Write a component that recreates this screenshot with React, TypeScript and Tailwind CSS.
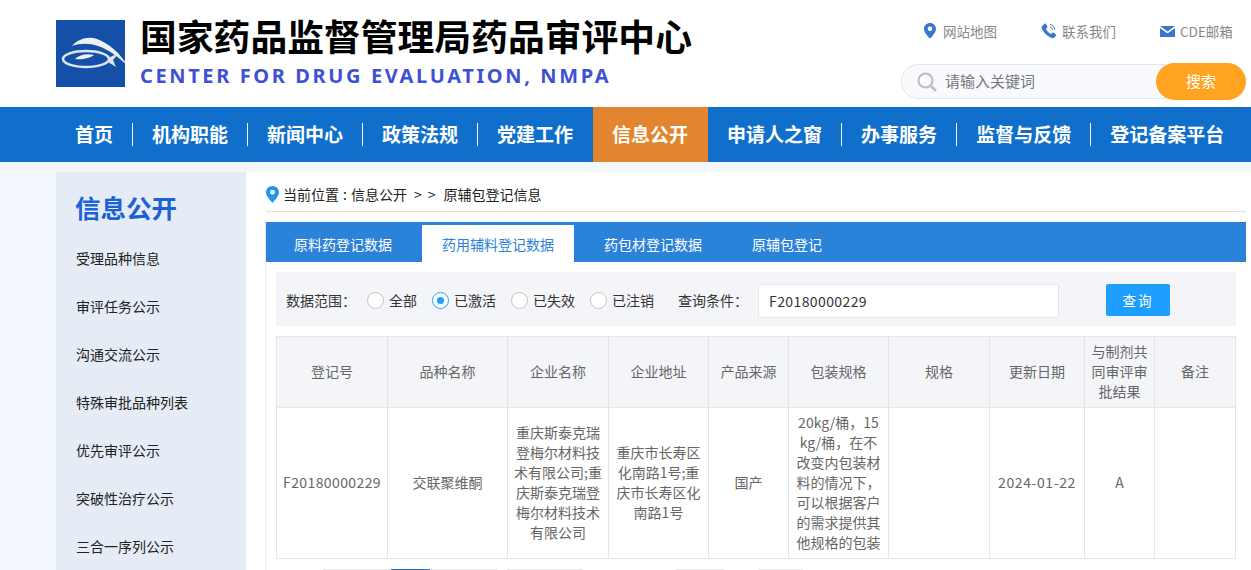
import React from 'react';

const navItems = ['首页', '机构职能', '新闻中心', '政策法规', '党建工作', '信息公开', '申请人之窗', '办事服务', '监督与反馈', '登记备案平台'];
const sideItems = ['受理品种信息', '审评任务公示', '沟通交流公示', '特殊审批品种列表', '优先审评公示', '突破性治疗公示', '三合一序列公示'];
const radios = ['全部', '已激活', '已失效', '已注销'];
const widths = [111, 120, 101, 100, 80, 100, 101, 95, 70, 81];
const companyLines = ['重庆斯泰克瑞', '登梅尔材料技', '术有限公司;重', '庆斯泰克瑞登', '梅尔材料技术', '有限公司'];
const addressLines = ['重庆市长寿区', '化南路1号;重', '庆市长寿区化', '南路1号'];
const packLines = ['20kg/桶，15', 'kg/桶，在不', '改变内包装材', '料的情况下，', '可以根据客户', '的需求提供其', '他规格的包装'];

const Logo: React.FC = () => (
  <svg width="69" height="67" viewBox="0 0 69 67" className="shrink-0 overflow-visible">
    <rect width="69" height="67" fill="#1450a8" />
    <path d="M16 26C22 19 32 16 41 19C52 23 63 32 72 46C62 37 52 29 42 26C33 23 24 23 16 26Z" fill="#eef1f4" />
    <ellipse cx="30" cy="39" rx="23" ry="8" fill="none" stroke="#dfe5ea" strokeWidth="2.500" />
    <path d="M52 38L63 33L57 40L60 47L52 42Z" fill="#dfe5ea" />
    <path d="M19 39C23 35 31 33 38 35C34 38 26 40 19 39Z" fill="#eef1f4" />
  </svg>
);

const Pin: React.FC<{ color: string; size: number }> = ({ color, size }) => (
  <svg width={size} height={size * 1.3} viewBox="0 0 20 26">
    <path fillRule="evenodd" d="M10 0C4.500 0 0 4.400 0 9.800C0 16.500 10 26 10 26S20 16.500 20 9.800C20 4.400 15.500 0 10 0ZM10 13.500A3.800 3.800 0 1 1 10 5.900A3.800 3.800 0 0 1 10 13.500Z" fill={color} />
  </svg>
);

const Phone: React.FC = () => (
  <svg width="16" height="16" viewBox="0 0 16 16">
    <path d="M1 3.200L3.600.800C4 .500 4.500.500 4.800.900L6.400 3.300C6.600 3.700 6.600 4.100 6.200 4.400L5 5.500C5.600 7.800 7.600 10 10 11L11.300 9.700C11.600 9.400 12.100 9.400 12.500 9.600L15 11.400C15.400 11.700 15.400 12.300 15.100 12.600L13.200 14.800C12.800 15.200 12.200 15.400 11.600 15.200C6.400 13.800 1.800 9 .500 4.600C.400 4.100.600 3.600 1 3.200Z" fill="#3a76cf" />
    <path d="M9 1.500C11.500 2 13.500 4 14 6.500M9 4C10.300 4.300 11.300 5.300 11.600 6.500" fill="none" stroke="#3a76cf" strokeWidth="1" />
  </svg>
);

const Mail: React.FC = () => (
  <svg width="15" height="11" viewBox="0 0 15 11">
    <path d="M0 0H15L7.500 5.500Z" fill="#3a76cf" />
    <path d="M0 2L7.500 7.500L15 2V11H0Z" fill="#3a76cf" />
  </svg>
);

const Lines: React.FC<{ lines: string[] }> = ({ lines }) => (
  <>
    {lines.map((l) => (
      <div key={l} className="whitespace-nowrap">{l}</div>
    ))}
  </>
);

const App: React.FC = () => {
  return (
    <div className="h-[570px] w-[1251px] overflow-hidden bg-[#f3f7fe] font-['Noto_Sans_CJK_SC','Noto_Sans',sans-serif]">
      {/* header */}
      <div className="flex h-[107px] justify-between bg-white pl-[56px] pr-[5px]">
        <div className="flex items-start pt-[20px]">
          <Logo />
          <div className="ml-[15px] -mt-[10px]">
            <div className="whitespace-nowrap text-[36.800px] font-bold leading-[50px] text-black">国家药品监督管理局药品审评中心</div>
            <div className="mt-[3px] whitespace-nowrap font-['Noto_Sans',sans-serif] text-[20px] font-bold leading-[26px] tracking-[2.620px] text-[#3f51d3]">CENTER FOR DRUG EVALUATION, NMPA</div>
          </div>
        </div>
        <div className="w-[345px] pt-[22px]">
          <div className="flex h-[18px] items-center text-[13.500px] leading-[18px] text-[#888888]">
            <span className="ml-[23px] flex w-[117px] items-center gap-[7px]"><Pin color="#3a76cf" size={12} /><span>网站地图</span></span>
            <span className="flex w-[119px] items-center gap-[5px]"><Phone /><span>联系我们</span></span>
            <span className="flex items-center gap-[5px]"><Mail /><span>CDE邮箱</span></span>
          </div>
          <div className="mt-[23px] flex items-center">
            <div className="flex h-[35px] w-[265px] items-center rounded-l-full border border-[#e3e5e8] bg-[#f8fafe] pl-[15px]">
              <svg width="20" height="20" viewBox="0 0 20 20">
                <circle cx="8.500" cy="8.500" r="7" fill="none" stroke="#bdbdbd" strokeWidth="2" />
                <path d="M14 14L19 19" stroke="#bdbdbd" strokeWidth="2.500" />
              </svg>
              <span className="ml-[8px] text-[15px] text-[#777777]">请输入关键词</span>
            </div>
            <div className="-ml-[10px] flex h-[37px] w-[90px] items-center justify-center rounded-full bg-[#ffa320] text-[15px] text-white">搜索</div>
          </div>
        </div>
      </div>

      {/* nav */}
      <div className="flex h-[55px] items-center bg-[#0f6fcb] pl-[56px]">
        {navItems.map((item, i) => (
          <div key={item} className={`flex h-full items-center ${item === '信息公开' ? 'bg-[#e3852f]' : ''}`}>
            <span className="-mt-[2px] whitespace-nowrap px-[19px] text-[19px] font-bold leading-none text-white">{item}</span>
            {i < navItems.length - 1 && navItems[i + 1] !== '信息公开' && item !== '信息公开' ? (
              <span className="-mt-[1px] h-[23px] w-px bg-white" />
            ) : (
              <span className="w-px" />
            )}
          </div>
        ))}
      </div>

      {/* body */}
      <div className="mt-[10px] flex pl-[56px]">
        <div className="h-[500px] w-[190px] shrink-0 bg-[#e6ecf5] pl-[20px]">
          <h2 className="-ml-px pt-[17px] text-[25.500px] font-bold leading-[36px] text-[#1c62d6]">信息公开</h2>
          <div className="mt-[9px]">
            {sideItems.map((item) => (
              <div key={item} className="flex h-[48px] items-center text-[14px] text-[#222222]">{item}</div>
            ))}
          </div>
        </div>

        <div className="min-h-[500px] w-[1005px] min-w-0 shrink-0 bg-white pl-[20px] pr-[5px]">
          <div className="flex h-[40px] items-center border-b border-[#e2e2e2] pt-[6px] text-[14px] text-[#222222]">
            <Pin color="#1e96f0" size={13} />
            <span className="ml-[4px]">当前位置</span>
            <span className="mx-[3px] w-[6px] text-center">:</span>
            <span>信息公开</span>
            <span className="ml-[7px]">&gt;</span>
            <span className="ml-[6px]">&gt;</span>
            <span className="ml-[8px]">原辅包登记信息</span>
          </div>

          <div className="-ml-px mt-[10px] border-l border-[#e8edf3]">
            <div className="flex h-[40px] items-end bg-[#2b82d9] text-[14px] leading-none text-white">
              <div className="flex h-[37px] items-center pl-[28px] pr-[30px]">原料药登记数据</div>
              <div className="flex h-[37px] items-center bg-white px-[20px] text-[#2b82d9]">药用辅料登记数据</div>
              <div className="flex h-[37px] items-center pl-[30px] pr-[25px]">药包材登记数据</div>
              <div className="flex h-[37px] items-center pl-[25px]">原辅包登记</div>
            </div>

            <div className="px-[10px] pt-[10px]">
              <div className="flex h-[54px] items-center bg-[#f4f5f9] pl-[10px] pt-[2px] text-[14px] text-[#333333]">
                <span className="w-[81px]">数据范围：</span>
                {radios.map((r, i) => (
                  <span key={r} className="mr-[15px] flex items-center gap-[5px]">
                    <span className={`flex h-[17px] w-[17px] items-center justify-center rounded-full border bg-white ${i === 1 ? 'border-[#1e9fff]' : 'border-[#c4c4c4]'}`}>
                      {i === 1 && <span className="h-[7px] w-[7px] rounded-full bg-[#1e9fff]" />}
                    </span>
                    {r}
                  </span>
                ))}
                <span className="ml-[9px] w-[80px]">查询条件：</span>
                <div className="mt-[2px] flex h-[34px] w-[301px] items-center rounded-[2px] border border-[#e6e6e6] bg-white pl-[10px] text-[14px] tracking-[0.400px] text-[#333333]">F20180000229</div>
                <div className="ml-[47px] flex h-[32px] w-[64px] items-center justify-center rounded-[2px] bg-[#1e9fff] text-[13.500px] tracking-[2px] text-white">查询</div>
              </div>

              <table className="mt-[10px] w-[959px] table-fixed border-collapse text-center text-[14px] leading-[20px] text-[#666666]">
                <colgroup>
                  {widths.map((w, i) => (
                    <col key={i} style={{ width: w }} />
                  ))}
                </colgroup>
                <thead>
                  <tr className="h-[71px] bg-[#f4f5f9] [&>th]:pb-[2px]">
                    {['登记号', '品种名称', '企业名称', '企业地址', '产品来源', '包装规格', '规格', '更新日期'].map((h) => (
                      <th key={h} className="border border-[#e4e6ea] px-[8px] font-normal">{h}</th>
                    ))}
                    <th className="border border-[#e4e6ea] px-[5px] font-normal">与制剂共同审评审批结果</th>
                    <th className="border border-[#e4e6ea] font-normal">备注</th>
                  </tr>
                </thead>
                <tbody>
                  <tr className="h-[151px] [&>td]:pb-[2px]">
                    <td className="border border-[#e4e6ea] tracking-[0.400px]">F20180000229</td>
                    <td className="border border-[#e4e6ea]">交联聚维酮</td>
                    <td className="border border-[#e4e6ea]"><Lines lines={companyLines} /></td>
                    <td className="border border-[#e4e6ea]"><Lines lines={addressLines} /></td>
                    <td className="border border-[#e4e6ea]">国产</td>
                    <td className="border border-[#e4e6ea]"><Lines lines={packLines} /></td>
                    <td className="border border-[#e4e6ea]" />
                    <td className="border border-[#e4e6ea] tracking-[0.600px]">2024-01-22</td>
                    <td className="border border-[#e4e6ea]">A</td>
                    <td className="border border-[#e4e6ea]" />
                  </tr>
                </tbody>
              </table>

              <div className="mt-[10px] flex h-[20px] items-start pl-[47px]">
                <div className="h-[20px] w-[68px] bg-[#e9e9e9]" />
                <div className="h-[20px] w-[39px] bg-[#2b6fc7]" />
                <div className="h-[20px] w-[67px] bg-[#e9e9e9]" />
                <div className="ml-[10px] h-[20px] w-[75px] bg-[#e9e9e9]" />
                <div className="ml-[94px] h-[20px] w-[48px] bg-[#e9e9e9]" />
                <div className="ml-[34px] h-[20px] w-[45px] bg-[#e9e9e9]" />
              </div>
            </div>
          </div>
        </div>
      </div>
    </div>
  );
};

export default App;
